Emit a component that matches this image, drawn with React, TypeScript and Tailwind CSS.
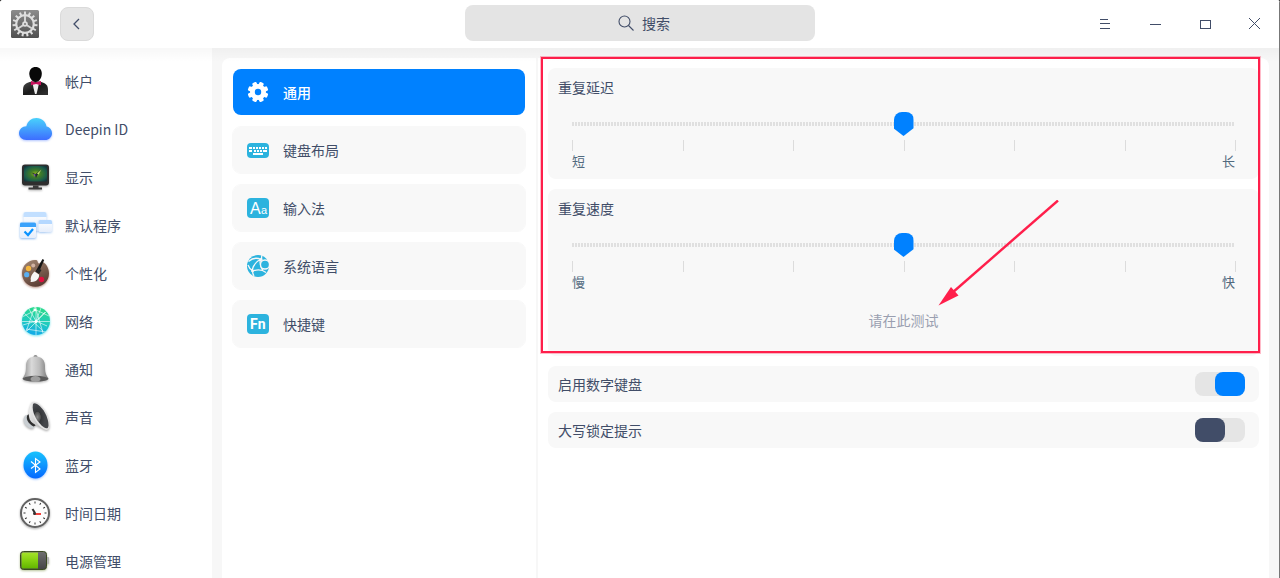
import React, { useState } from 'react';

interface NavItem {
  label: string;
  icon: React.ReactNode;
}

interface SliderRowProps {
  id: string;
  title: string;
  minLabel: string;
  maxLabel: string;
}

interface SwitchRowProps {
  id: string;
  label: string;
  defaultOn: boolean;
}

const SideIcon: React.FC<{ children: React.ReactNode }> = ({ children }) => (
  <svg width="36" height="36" viewBox="0 0 36 36" fill="none" className="shrink-0 overflow-visible" aria-hidden="true">
    {children}
  </svg>
);

const hourMarks = [0, 30, 60, 90, 120, 150, 180, 210, 240, 270, 300, 330];
const gearTeeth = [0, 24, 48, 72, 96, 120, 144, 168, 192, 216, 240, 264, 288, 312, 336];

const AccountIcon = () => (
  <SideIcon>
    <defs>
      <linearGradient id="suit" x1="0" y1="0" x2="1" y2="1">
        <stop offset="0" stopColor="#4a4a4a" />
        <stop offset="0.5" stopColor="#1b1b1b" />
        <stop offset="1" stopColor="#333" />
      </linearGradient>
    </defs>
    <path d="M6 32v-5c0-5 2-7 9-8.500h7c7 1.500 9 3.500 9 8.500v5z" fill="url(#suit)" />
    <path d="M15.500 20h6.500l-1 5-1.500 6h-1.500L16.500 25z" fill="#eee" />
    <path d="M18.600 4c3.800 0 6.200 2.700 6.200 6.500 0 4.300-2.500 8.500-6.200 8.500s-6.300-4.200-6.300-8.500C12.300 6.700 14.800 4 18.600 4z" fill="#080808" />
    <path d="M14 18l4.500 1.500L24 18v4.200l-5-1.200-5 1.200z" fill="#c8105c" />
  </SideIcon>
);

const CloudIcon = () => (
  <SideIcon>
    <defs>
      <linearGradient id="cloud" x1="0" y1="0" x2="0" y2="1">
        <stop offset="0" stopColor="#48d2fb" />
        <stop offset="1" stopColor="#3d6dff" />
      </linearGradient>
    </defs>
    <g className="drop-shadow-[0_1px_1px_#3d6dff66]">
      <path d="M9.500 29C5 29 2 26 2 22.300c0-3.900 3.200-7 7.400-7.100C10.500 10.300 14.500 7 19.500 7c5.300 0 9.400 3.600 10 8.600 3.200.5 5.500 3.200 5.500 6.600 0 3.900-3 6.800-6.900 6.800z" fill="url(#cloud)" />
    </g>
  </SideIcon>
);

const DisplayIcon = () => (
  <SideIcon>
    <defs>
      <radialGradient id="screen" cx="0.5" cy="0.5" r="0.65">
        <stop offset="0" stopColor="#8fb31e" />
        <stop offset="0.35" stopColor="#3f7c28" />
        <stop offset="0.75" stopColor="#1b5b4a" />
        <stop offset="1" stopColor="#12343c" />
      </radialGradient>
    </defs>
    <g className="drop-shadow-[0_1px_1px_#0005]">
      <rect x="5" y="5.500" width="27" height="21" rx="3" fill="#2e2e2e" />
      <rect x="7" y="7" width="23" height="15.500" rx="1" fill="url(#screen)" />
      <path d="M16 26.500h5.500v2H25v2H11.500v-2H16z" fill="#3a3a3a" />
    </g>
    <path d="M14.500 13.500l4 1.500 6-4.500-4 5.500-1.500 3-1-2.500z" fill="#1c2b2a" />
    <path d="M20 14.500l4.500-4-3 5z" fill="#c4e070" />
    <path d="M16.500 15l2 .5-.5 2.500z" fill="#7d4dc4" />
  </SideIcon>
);

const DefaultAppsIcon = () => (
  <SideIcon>
    <defs>
      <linearGradient id="pane" x1="0" y1="0" x2="0" y2="1">
        <stop offset="0" stopColor="#ffffff" />
        <stop offset="1" stopColor="#e6eefb" />
      </linearGradient>
    </defs>
    <g className="drop-shadow-[0_1px_1px_#2d7fe255]">
      <rect x="6.500" y="5" width="23" height="19" rx="2" fill="url(#pane)" />
      <path d="M6.500 10V7a2 2 0 0 1 2-2h19a2 2 0 0 1 2 2v3z" fill="#c2dfff" />
    </g>
    <g className="drop-shadow-[0_1px_1px_#2d7fe255]">
      <rect x="21.500" y="13" width="13.500" height="12" rx="1.500" fill="url(#pane)" />
      <path d="M21.500 17v-2.500a1.500 1.500 0 0 1 1.500-1.500h10.500a1.500 1.500 0 0 1 1.500 1.500V17z" fill="#b5d8ff" />
    </g>
    <g className="drop-shadow-[0_1px_1px_#2d7fe288]">
      <rect x="3" y="15.500" width="16" height="15.500" rx="1.500" fill="url(#pane)" />
      <path d="M3 20v-3a1.500 1.500 0 0 1 1.500-1.500h13A1.500 1.500 0 0 1 19 17v3z" fill="#3ba2fb" />
    </g>
    <path d="M7.500 24.500l3.500 3.500 5-6" stroke="#0a93ff" strokeWidth="2.200" />
  </SideIcon>
);

const PaletteIcon = () => (
  <SideIcon>
    <defs>
      <linearGradient id="wood" x1="0" y1="0" x2="0.5" y2="1">
        <stop offset="0" stopColor="#a48873" />
        <stop offset="1" stopColor="#5d4036" />
      </linearGradient>
    </defs>
    <g className="drop-shadow-[0_1px_1px_#8b452e99]">
      <path d="M20 5.200C13 3.800 5 9.500 5 18.300 5 26 11 31.800 18.500 31.800S32 26 32 18.500c0-5-2.500-9.500-6.500-11.700-1.700 0-2 1.700-3.500 1.700-1.200 0-1.200-2-2-3.300z" fill="url(#wood)" />
    </g>
    <circle cx="11.500" cy="13.500" r="2.700" fill="#f4b53c" />
    <circle cx="16.200" cy="10.500" r="2" fill="#d2b3a2" />
    <circle cx="9.700" cy="19.700" r="2.600" fill="#5aaef0" />
    <circle cx="24.500" cy="24.500" r="2.700" fill="#e0103f" />
    <path d="M25.500 4l1.700 1-5.700 13-2.800-1.800z" fill="#151515" />
    <path d="M22 13.500l2.500 1.500-2.500 4-3.500-2.500z" fill="#242424" />
    <path d="M17.500 16.500l4.500 3c.5 3-2 8-8.500 7.500 1-2-.5-2.500.5-5 .8-2.500 1.800-4 3.500-5.500z" fill="#f5f5f5" />
  </SideIcon>
);

const NetworkIcon = () => (
  <SideIcon>
    <defs>
      <linearGradient id="net" x1="0.600" y1="0" x2="0.400" y2="1">
        <stop offset="0" stopColor="#2bdb87" />
        <stop offset="0.550" stopColor="#1fcbc0" />
        <stop offset="1" stopColor="#12a8ea" />
      </linearGradient>
      <clipPath id="netClip">
        <circle cx="19" cy="18" r="14" />
      </clipPath>
    </defs>
    <g className="drop-shadow-[0_1px_1px_#1bd4e099]">
      <circle cx="19" cy="18" r="14" fill="url(#net)" />
    </g>
    <g clipPath="url(#netClip)" stroke="#fff" strokeWidth="0.700" strokeOpacity="0.850">
      <path d="M5 18.500h28M18 3l-9 26M18 3l8 27M7 10l19 18M30 8L10 28M5 14l14-7 13 6M19 4v28M9 26l20 3M24 5l-5 13M12 6l7 12 11 5M6 22l13-4 9-9" />
    </g>
    <circle cx="19" cy="18.500" r="1.500" fill="#fff" />
    <circle cx="18" cy="7" r="1.200" fill="#fff" />
  </SideIcon>
);

const BellIcon = () => (
  <SideIcon>
    <defs>
      <linearGradient id="bell" x1="0" y1="0" x2="1" y2="0">
        <stop offset="0" stopColor="#8c8c8c" />
        <stop offset="0.350" stopColor="#d9d9d9" />
        <stop offset="0.650" stopColor="#bcbcbc" />
        <stop offset="1" stopColor="#777" />
      </linearGradient>
    </defs>
    <g className="drop-shadow-[0_1px_1px_#0004]">
      <circle cx="18.500" cy="5.800" r="1.900" fill="#8b8b8b" />
      <path d="M18.500 5.500c6.500 0 9.500 4 9.500 9.500 0 6 .5 8 3.500 12.500 0 2-6 3.200-13 3.200s-13-1.200-13-3.200C8.500 23 9 21 9 15c0-5.500 3-9.500 9.500-9.500z" fill="url(#bell)" />
      <ellipse cx="18.500" cy="27.700" rx="12.600" ry="2.900" fill="#5a5a5a" />
      <ellipse cx="18.500" cy="28" rx="5" ry="3" fill="#9e9e9e" />
    </g>
  </SideIcon>
);

const SoundIcon = () => (
  <SideIcon>
    <defs>
      <linearGradient id="horn" x1="0" y1="0" x2="1" y2="1">
        <stop offset="0" stopColor="#f7f7f7" />
        <stop offset="1" stopColor="#a9a9a9" />
      </linearGradient>
      <radialGradient id="cone" cx="0.300" cy="0.550" r="0.500">
        <stop offset="0" stopColor="#8a8a8a" />
        <stop offset="0.400" stopColor="#4f4f4f" />
        <stop offset="0.450" stopColor="#333538" />
        <stop offset="1" stopColor="#45474b" />
      </radialGradient>
    </defs>
    <g className="drop-shadow-[0_1px_1px_#0005]">
      <path d="M9 16c-3 2-3.500 7 0 10.500 2.500 2.600 5.500 3.500 8 2.500l-3-12z" fill="#c9ced2" />
      <path d="M10.500 16c-2 3 0 8.500 6 11.500l2-1-5-12z" fill="#2f2f2f" />
      <path d="M14.500 4C11.500 10 10.500 18 14 22.500c3.500 4 12 7 17 8.500z" fill="url(#horn)" />
      <path d="M14.500 4c1.200-2.200 5-1.800 9 2C29 11 33 20 32.500 27c-.3 4-2.500 5-6 3C20 26.500 12.500 14 14.500 4z" fill="#e4e4e4" />
    </g>
    <path d="M16 5c1.200-1.500 4-.5 7 2.300 5 4.700 8.700 13 8.500 19.200-.2 3.300-2 3.500-4.700 1.700C21 24.300 14 13.500 16 5z" fill="url(#cone)" />
  </SideIcon>
);

const BluetoothIcon = () => (
  <SideIcon>
    <defs>
      <linearGradient id="bt" x1="0" y1="0" x2="0" y2="1">
        <stop offset="0" stopColor="#17c3fd" />
        <stop offset="1" stopColor="#0468ff" />
      </linearGradient>
    </defs>
    <g className="drop-shadow-[0_1px_1px_#0468ff66]">
      <ellipse cx="18.500" cy="18" rx="12" ry="13.500" fill="url(#bt)" />
    </g>
    <path d="M14 14.500l9 7.500-4.500 3.500v-14l4.500 3.500-9 6.500" stroke="#fff" strokeWidth="1.100" />
  </SideIcon>
);

const ClockIcon = () => (
  <SideIcon>
    <g className="drop-shadow-[0_1px_1px_#0005]">
      <circle cx="18" cy="18" r="14" fill="#fcfcfc" stroke="#626262" strokeWidth="2" />
    </g>
    {hourMarks.map((a) => (
      <path key={a} d="M18 6.500v2" stroke="#333" strokeWidth="1" transform={`rotate(${a} 18 18)`} />
    ))}
    <path d="M18 18l-2.500-4" stroke="#333" strokeWidth="2" />
    <path d="M17 19h7" stroke="#f1413e" strokeWidth="2" />
    <circle cx="17.500" cy="18.500" r="1.500" fill="#333" />
  </SideIcon>
);

const BatteryIcon = () => (
  <SideIcon>
    <defs>
      <linearGradient id="charge" x1="0" y1="0" x2="0" y2="1">
        <stop offset="0" stopColor="#a5e22a" />
        <stop offset="0.500" stopColor="#84d010" />
        <stop offset="1" stopColor="#62b500" />
      </linearGradient>
      <linearGradient id="cell" x1="0" y1="0" x2="0" y2="1">
        <stop offset="0" stopColor="#707070" />
        <stop offset="1" stopColor="#444" />
      </linearGradient>
    </defs>
    <g className="drop-shadow-[0_1px_1px_#4a6a0066]">
      <rect x="29" y="14" width="3" height="7" rx="1" fill="#b5b5b5" />
      <rect x="3.500" y="8.500" width="26" height="18" rx="3" fill="url(#cell)" stroke="#3a4a20" />
    </g>
    <path d="M6 9.500h15v16H6a1.500 1.500 0 0 1-1.500-1.500V11A1.500 1.500 0 0 1 6 9.500z" fill="url(#charge)" />
  </SideIcon>
);

const sideItems: NavItem[] = [
  { label: '帐户', icon: <AccountIcon /> },
  { label: 'Deepin ID', icon: <CloudIcon /> },
  { label: '显示', icon: <DisplayIcon /> },
  { label: '默认程序', icon: <DefaultAppsIcon /> },
  { label: '个性化', icon: <PaletteIcon /> },
  { label: '网络', icon: <NetworkIcon /> },
  { label: '通知', icon: <BellIcon /> },
  { label: '声音', icon: <SoundIcon /> },
  { label: '蓝牙', icon: <BluetoothIcon /> },
  { label: '时间日期', icon: <ClockIcon /> },
  { label: '电源管理', icon: <BatteryIcon /> },
];

const GeneralIcon = () => (
  <svg width="22" height="22" viewBox="0 0 22 22" aria-hidden="true">
    <g fill="#fff">
      {[22.5, 67.5, 112.5, 157.5].map((a) => (
        <rect key={a} x="8.700" y="0.700" width="4.600" height="20.600" rx="1.200" transform={`rotate(${a} 11 11)`} />
      ))}
      <circle cx="11" cy="11" r="8" />
    </g>
    <circle cx="11" cy="11" r="3.200" fill="#0081ff" />
  </svg>
);

const KeyboardIcon = () => (
  <svg width="22" height="22" viewBox="0 0 22 22" aria-hidden="true">
    <rect y="4" width="22" height="15" rx="4" fill="#2cb3de" />
    <path d="M2 9h18" stroke="#fff" strokeWidth="2" strokeDasharray="3 1 2 1 2 1 2 1 2 1 2" />
    <path d="M2 12h18" stroke="#fff" strokeWidth="2" strokeDasharray="3 2 2 1 2 1 2 1 4" />
    <path d="M6 15h10" stroke="#fff" strokeWidth="2" />
  </svg>
);

const InputMethodIcon = () => (
  <svg width="22" height="22" viewBox="0 0 22 22" aria-hidden="true">
    <rect y="1" width="22" height="20" rx="4" fill="#2cb3de" />
    <text x="3" y="17" fontSize="16" fill="#fff" fontFamily="Liberation Sans, sans-serif">A</text>
    <text x="14" y="17" fontSize="11" fill="#fff" fontFamily="Liberation Sans, sans-serif">a</text>
  </svg>
);

const LanguageIcon = () => (
  <svg width="22" height="22" viewBox="0 0 22 22" fill="none" aria-hidden="true">
    <circle cx="11" cy="11" r="11" fill="#2cb3de" />
    <g stroke="#f7f7f7" strokeWidth="1.300">
      <path d="M1.500 6.500C5 3.500 10 2.500 14 4.500M15 0c-.5 1.500-.5 3-.5 4.500M14 4C10 6 6.500 9.500 5 15.500M1 10c1 3 3 5 5 6M6 16c4-1.500 9-1.500 13 1.500M13.500 4.500c-1 4 0 8 2.500 11M5.500 16c0 2 .5 3.500 1.500 5" />
      <circle cx="18" cy="9.500" r="4.500" fill="#2cb3de" />
    </g>
    <circle cx="14" cy="4.500" r="1.500" fill="#f7f7f7" />
    <circle cx="5.500" cy="15.800" r="1.500" fill="#f7f7f7" />
  </svg>
);

const FnIcon = () => (
  <svg width="22" height="22" viewBox="0 0 22 22" aria-hidden="true">
    <rect y="1" width="22" height="20" rx="4" fill="#2cb3de" />
    <text x="3" y="16" fontSize="14" fontWeight="700" fill="#fff" fontFamily="Roboto, sans-serif">Fn</text>
  </svg>
);

const keyboardItems: NavItem[] = [
  { label: '通用', icon: <GeneralIcon /> },
  { label: '键盘布局', icon: <KeyboardIcon /> },
  { label: '输入法', icon: <InputMethodIcon /> },
  { label: '系统语言', icon: <LanguageIcon /> },
  { label: '快捷键', icon: <FnIcon /> },
];

const SliderRow: React.FC<SliderRowProps> = ({ id, title, minLabel, maxLabel }) => {
  const [value, setValue] = useState(4);

  return (
    <div className="pt-2">
      <label htmlFor={id} className="block px-2.5 leading-[22px]">{title}</label>
      <div className="mt-3.5 px-3.5">
        <input
          id={id}
          type="range"
          min={1}
          max={7}
          value={value}
          onChange={(e) => setValue(Number(e.target.value))}
          className="block h-6 w-full appearance-none bg-[repeating-linear-gradient(90deg,#e0e0e0_0_2px,transparent_2px_3px)] bg-[length:calc(100%-20px)_4px] bg-center bg-no-repeat outline-none [&::-webkit-slider-thumb]:h-6 [&::-webkit-slider-thumb]:w-5 [&::-webkit-slider-thumb]:appearance-none [&::-webkit-slider-thumb]:rounded-t-lg [&::-webkit-slider-thumb]:bg-[#0081ff] [&::-webkit-slider-thumb]:[clip-path:polygon(0_0,100%_0,100%_68%,50%_100%,0_68%)]"
        />
      </div>
      <div className="mt-1 mr-[23px] ml-6 flex justify-between">
        {[1, 2, 3, 4, 5, 6, 7].map((n) => (
          <span key={n} className="h-[11px] w-px bg-[#dcdcdc]"></span>
        ))}
      </div>
      <div className="mx-6 flex justify-between text-[13px] leading-5 text-[#526a7f]">
        <span>{minLabel}</span>
        <span>{maxLabel}</span>
      </div>
    </div>
  );
};

const SwitchRow: React.FC<SwitchRowProps> = ({ id, label, defaultOn }) => {
  const [on, setOn] = useState(defaultOn);

  return (
    <div className="flex h-9 items-center justify-between rounded-lg bg-[#f8f8f8] pr-3.5 pl-2.5">
      <label htmlFor={id}>{label}</label>
      <input
        id={id}
        type="checkbox"
        role="switch"
        checked={on}
        onChange={(e) => setOn(e.target.checked)}
        className="h-6 w-[50px] appearance-none rounded-lg bg-[#e5e5e5] before:block before:h-6 before:w-[30px] before:rounded-lg before:bg-[#414d68] checked:before:ml-5 checked:before:bg-[#0081ff]"
      />
    </div>
  );
};

const Header = () => (
  <header className="flex h-12 shrink-0 items-center bg-white">
    <div className="flex flex-1 items-center gap-5">
      <svg width="30" height="30" viewBox="0 0 30 30" className="ml-2.5" aria-hidden="true">
        <defs>
          <linearGradient id="appBg" x1="0" y1="0" x2="0" y2="1">
            <stop offset="0" stopColor="#8c8c8c" />
            <stop offset="1" stopColor="#505050" />
          </linearGradient>
        </defs>
        <rect x="1" y="1" width="28" height="28" rx="1.500" fill="url(#appBg)" />
        <g fill="#dedede">
          {gearTeeth.map((a) => (
            <rect key={a} x="14" y="2.500" width="2" height="4" transform={`rotate(${a} 15 15)`} />
          ))}
        </g>
        <circle cx="15" cy="15" r="8.800" fill="none" stroke="#dedede" strokeWidth="2.200" />
        <path d="M15 15V7M15 15l-7 4.500M15 15l7 4.500" stroke="#d5d5d5" strokeWidth="2" />
        <circle cx="15" cy="15" r="2.800" fill="#dedede" />
        <circle cx="15" cy="15" r="1" fill="#777" />
      </svg>
      <button
        aria-label="返回"
        className="flex h-[34px] w-[34px] items-center justify-center rounded-lg border border-[#dadada] bg-[#e5e5e5]"
      >
        <svg width="12" height="12" viewBox="0 0 12 12" fill="none" stroke="#414d68" strokeWidth="1.300" aria-hidden="true">
          <path d="M8 1L3 6l5 5" />
        </svg>
      </button>
    </div>
    <label className="mt-[5px] flex h-9 w-[350px] items-center justify-center gap-2 self-start rounded-lg bg-[#e4e4e4] pl-2">
      <svg width="16" height="16" viewBox="0 0 16 16" fill="none" stroke="#414d68" strokeWidth="1.100" aria-hidden="true">
        <circle cx="6.500" cy="6.500" r="5.500" />
        <path d="M10.500 10.500l5 5" />
      </svg>
      <input type="text" aria-label="搜索" placeholder="搜索" className="w-7 outline-none placeholder:text-[#414d68]" />
    </label>
    <div className="flex flex-1 justify-end">
      <button aria-label="菜单" className="flex h-12 w-[50px] items-center justify-center">
        <svg width="12" height="12" viewBox="0 0 12 12" shapeRendering="crispEdges" fill="#414d68" aria-hidden="true">
          <path d="M1 1h8v1H1zM1 5h10v1H1zM1 10h10v1H1z" />
        </svg>
      </button>
      <button aria-label="最小化" className="flex h-12 w-[50px] items-center justify-center">
        <svg width="12" height="12" viewBox="0 0 12 12" shapeRendering="crispEdges" fill="#414d68" aria-hidden="true">
          <path d="M1 6h11v1H1z" />
        </svg>
      </button>
      <button aria-label="最大化" className="flex h-12 w-[50px] items-center justify-center">
        <svg width="12" height="12" viewBox="0 0 12 12" fill="none" stroke="#414d68" aria-hidden="true">
          <rect x="1.500" y="2.500" width="10" height="8" />
        </svg>
      </button>
      <button aria-label="关闭" className="flex h-12 w-[50px] items-center justify-center">
        <svg width="12" height="12" viewBox="0 0 12 12" fill="none" stroke="#414d68" aria-hidden="true">
          <path d="M0 0l11 11M11 0L0 11" />
        </svg>
      </button>
    </div>
  </header>
);

const App: React.FC = () => {
  const [selected, setSelected] = useState(0);

  return (
    <div className="h-screen overflow-hidden bg-[#1a1a1a] font-['Noto_Sans_CJK_SC',sans-serif] text-sm text-[#414d68]">
      <div className="relative flex h-full flex-col overflow-hidden rounded-t-[3px] bg-[#f7f7f7]">
        <Header />
        <div className="relative flex min-h-0 flex-1">
          <nav className="w-[212px] shrink-0 overflow-hidden bg-white pt-[9px]">
            <ul>
              {sideItems.map((item) => (
                <li key={item.label}>
                  <a href="#" className="flex h-12 items-center gap-3 pl-[17px]">
                    {item.icon}
                    <span>{item.label}</span>
                  </a>
                </li>
              ))}
            </ul>
          </nav>

          <main className="flex min-w-0 flex-1 gap-0.5 pt-2.5 pr-[11px] pl-2.5">
            <ul className="flex w-[314px] shrink-0 flex-col gap-2.5 rounded-tl-lg bg-white p-2.5">
              {keyboardItems.map((item, i) => (
                <li key={item.label}>
                  <button
                    onClick={() => setSelected(i)}
                    className={`flex h-12 w-full items-center gap-3.5 rounded-[9px] border bg-clip-padding pl-3.5 text-left ${
                      selected === i ? 'border-transparent bg-[#0081ff] font-medium text-white' : 'border-[#f8f8f8] bg-[#f8f8f8]'
                    }`}
                  >
                    {item.icon}
                    <span>{item.label}</span>
                  </button>
                </li>
              ))}
            </ul>

            <section className="flex min-w-0 flex-1 flex-col gap-2.5 rounded-tr-lg bg-white p-2.5">
              <div className="relative flex flex-col gap-2.5">
                <div className="rounded-lg bg-[#f8f8f8] pb-2">
                  <SliderRow id="repeat-delay" title="重复延迟" minLabel="短" maxLabel="长" />
                </div>
                <div className="relative rounded-lg bg-[#f8f8f8] pb-[18px]">
                  <SliderRow id="repeat-rate" title="重复速度" minLabel="慢" maxLabel="快" />
                  <div className="px-2.5 pt-2.5">
                    <input
                      type="text"
                      aria-label="请在此测试"
                      placeholder="请在此测试"
                      className="block h-9 w-full text-center outline-none placeholder:text-[#9a9fb0]"
                    />
                  </div>
                  <svg
                    width="122"
                    height="107"
                    viewBox="0 0 122 107"
                    className="pointer-events-none absolute top-[11px] left-1/2 ml-[34px]"
                    aria-hidden="true"
                  >
                    <path d="M120 0.500L14 93" stroke="#ff1f4b" strokeWidth="2.400" />
                    <path d="M0.500 105.500L13 87l7.500 8.500z" fill="#ff1f4b" />
                  </svg>
                </div>
                <div className="pointer-events-none absolute -top-[11px] -right-px bottom-[3px] -left-[7px] border-2 border-[#ff1f4b] ring-1 ring-[#ff1f4b]/30"></div>
              </div>
              <SwitchRow id="numlock" label="启用数字键盘" defaultOn={true} />
              <SwitchRow id="capslock" label="大写锁定提示" defaultOn={false} />
            </section>
          </main>
          <div className="pointer-events-none absolute inset-x-0 top-0 h-3.5 bg-linear-to-b from-black/3 to-transparent"></div>
        </div>
        <div className="absolute inset-y-0 right-0 w-px bg-[#777]"></div>
      </div>
    </div>
  );
};

export default App;
